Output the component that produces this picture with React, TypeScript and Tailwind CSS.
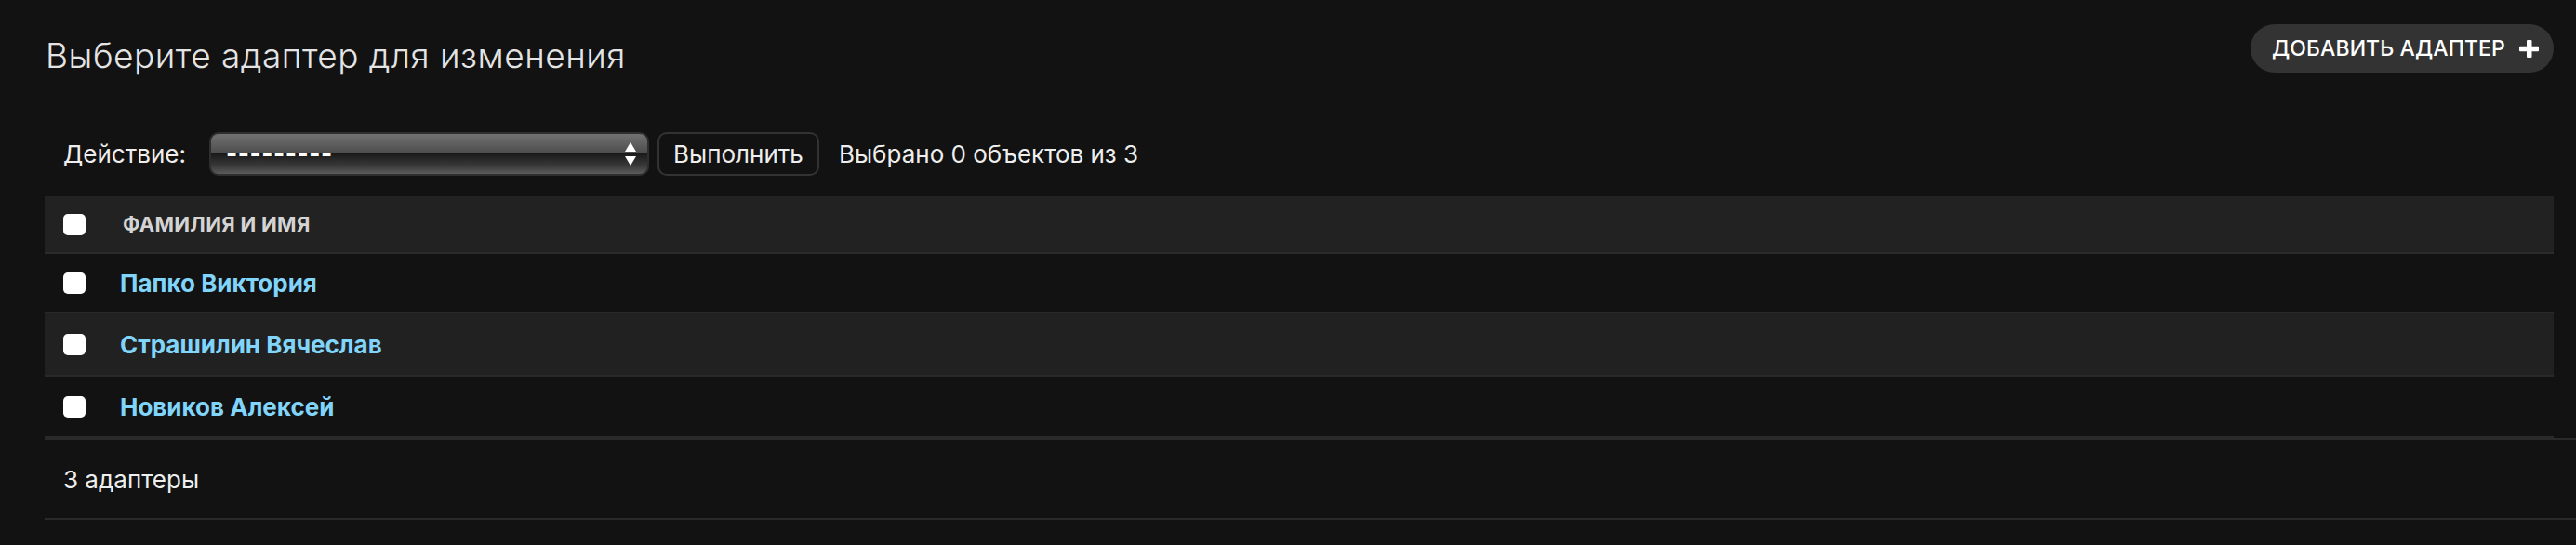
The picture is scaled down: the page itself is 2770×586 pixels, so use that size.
import React from "react";

const rows = [
  { name: "Папко Виктория", cls: "h-[64px] bg-transparent" },
  { name: "Страшилин Вячеслав", cls: "h-[68px] bg-[#212121]" },
  { name: "Новиков Алексей", cls: "h-[66px] bg-transparent" },
];

function Box() {
  return <div className="w-[24px] h-[23px] rounded-[5px] bg-white shrink-0" />;
}

export default function App() {
  return (
    <div
      className="w-full min-h-[586px] bg-[#121212] text-[#eeeeee]"
      style={{ fontFamily: "Inter, 'Noto Sans', sans-serif" }}
    >
      <div className="pl-[48px]">
        {/* Header */}
        <div className="flex items-start justify-between pr-[24px] pt-[26px]">
          <h1 className="mt-[15px] ml-[1px] text-[37px] leading-none font-light tracking-[0.5px] text-[#e4e4e4]">
            Выберите адаптер для изменения
          </h1>
          <button className="h-[52px] w-[326px] rounded-full bg-[#333333] flex items-center pl-[23px] text-white text-[23px] font-medium tracking-[0.1px] uppercase">
            <span>Добавить адаптер</span>
            <svg className="ml-[15px]" width="21" height="19" viewBox="0 0 21 19">
              <rect x="8" y="0" width="5.5" height="19" rx="1" fill="#ffffff" />
              <rect x="0" y="6.75" width="21" height="5.5" rx="1" fill="#ffffff" />
            </svg>
          </button>
        </div>

        {/* Actions */}
        <div className="mt-[64px] h-[47px] flex items-center pl-[20px] text-[26px]">
          <span className="text-[#eeeeee]">Действие:</span>
          <div className="ml-[25px] relative h-[47px] w-[473px] rounded-[10px] border-2 border-[#2e2e2e] bg-[linear-gradient(to_bottom,#727272_0%,#4c4c4c_48%,#1a1a1a_50%,#3a3a3a_80%,#5c5c5c_100%)] flex items-center pl-[16px]">
            <span className="text-white font-bold text-[26px] tracking-[0.6px] leading-none -mt-[2px]">---------</span>
            <svg className="absolute right-[12px] top-[9px]" width="12" height="26" viewBox="0 0 12 26">
              <polygon points="6,0 12,10 0,10" fill="#ffffff" />
              <polygon points="0,15 12,15 6,25" fill="#ffffff" />
            </svg>
          </div>
          <button className="ml-[9px] h-[47px] w-[174px] rounded-[10px] border-2 border-[#333333] bg-[#121212] text-[26px] text-[#eeeeee] flex items-center justify-center">
            Выполнить
          </button>
          <span className="ml-[21px] text-[#eeeeee]">Выбрано 0 объектов из 3</span>
        </div>

        {/* Table */}
        <div className="mt-[22px] mr-[24px]">
          <div className="h-[62px] bg-[#222222] border-b-2 border-[#2b2b2b] flex items-center">
            <div className="w-[84px] pl-[20px] flex items-center">
              <Box />
            </div>
            <span className="text-[22px] font-bold uppercase text-[#d4d4d4] tracking-[0.3px]">
              Фамилия и имя
            </span>
          </div>
          {rows.map((r) => (
            <div key={r.name} className={`${r.cls} border-b-2 border-[#292929] flex items-center`}>
              <div className="w-[81px] pl-[20px] flex items-center">
                <Box />
              </div>
              <a className="text-[26px] font-bold text-[#81d4fa] cursor-pointer">{r.name}</a>
            </div>
          ))}
        </div>

        {/* Paginator */}
        <div className="h-[88px] border-y-2 border-[#2a2a2a] flex items-center pl-[20px] text-[26px] text-[#eeeeee]">
          3 адаптеры
        </div>
      </div>
    </div>
  );
}
